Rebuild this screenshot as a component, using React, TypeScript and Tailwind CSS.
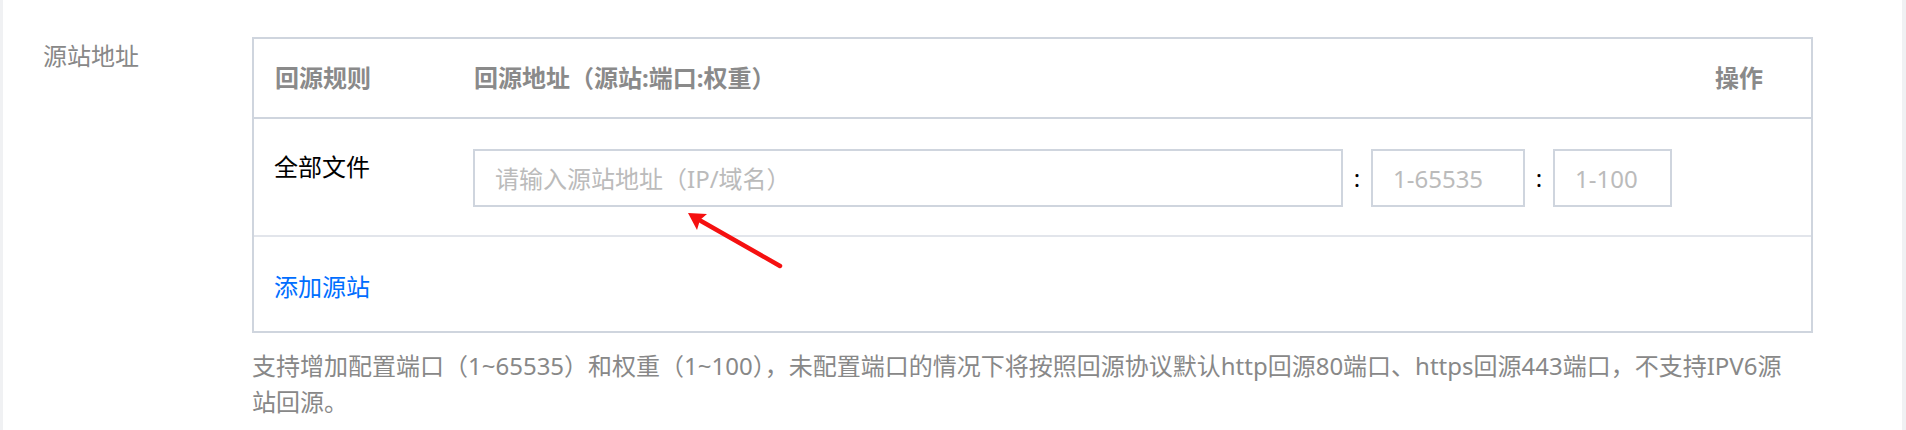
import React from "react";

const font = { fontFamily: '"Noto Sans", "Noto Sans CJK SC", sans-serif' };

function Field({ width, placeholder }: { width: string; placeholder: string }) {
  return (
    <input
      className={`${width} h-[58px] border-2 border-[#cfd5de] bg-white px-[20px] text-[24px] text-black outline-none placeholder:text-[#bbbbbb]`}
      placeholder={placeholder}
      style={font}
    />
  );
}

function Colon() {
  return <span className="w-[28px] text-center text-[24px] leading-[36px] text-black">:</span>;
}

export default function App() {
  return (
    <div className="h-[430px] w-full bg-[#f0f1f3] pl-[3px] pr-[4px]" style={font}>
      <div className="relative flex h-full bg-white pt-[37px]">
        {/* label column */}
        <div className="w-[249px] shrink-0 pl-[40px] pt-[1px] text-[24px] leading-[36px] text-[#888888]">
          源站地址
        </div>

        <div className="w-[1561px] shrink-0">
          {/* table */}
          <div className="border-2 border-[#cfd5de]">
            <div className="grid h-[80px] grid-cols-[200px_1fr_116px] items-center border-b-2 border-[#cfd5de] text-[24px] font-bold leading-[36px] text-[#8a8a8a]">
              <div className="pl-[21px]">回源规则</div>
              <div className="pl-[20px]">回源地址（源站:端口:权重）</div>
              <div className="pl-[20px]">操作</div>
            </div>

            <div className="grid grid-cols-[200px_1fr_116px] border-b-2 border-[#e2e5eb] pb-[28px] pt-[30px]">
              <div className="pl-[20px] text-[24px] leading-[36px] text-black">全部文件</div>
              <div className="flex items-center pl-[19px]">
                <Field width="w-[870px]" placeholder="请输入源站地址（IP/域名）" />
                <Colon />
                <Field width="w-[154px]" placeholder="1-65535" />
                <Colon />
                <Field width="w-[119px]" placeholder="1-100" />
              </div>
              <div />
            </div>

            <div className="pb-[26px] pl-[20px] pt-[32px]">
              <a href="#" className="text-[24px] leading-[36px] text-[#006eff]">
                添加源站
              </a>
            </div>
          </div>

          <p className="mt-[15px] pr-[18px] text-[24px] leading-[36px] text-[#888888]">
            支持增加配置端口（1~65535）和权重（1~100），未配置端口的情况下将按照回源协议默认http回源80端口、https回源443端口，不支持IPV6源站回源。
          </p>
        </div>

        {/* red annotation arrow */}
        <svg
          className="pointer-events-none absolute left-[677px] top-[205px]"
          width="110"
          height="70"
          viewBox="0 0 110 70"
        >
          <line x1="100" y1="61" x2="21" y2="16" stroke="#f51010" strokeWidth="4.5" strokeLinecap="round" />
          <polygon points="8,8 27,9 20,15 17,25" fill="#f51010" />
        </svg>
      </div>
    </div>
  );
}
